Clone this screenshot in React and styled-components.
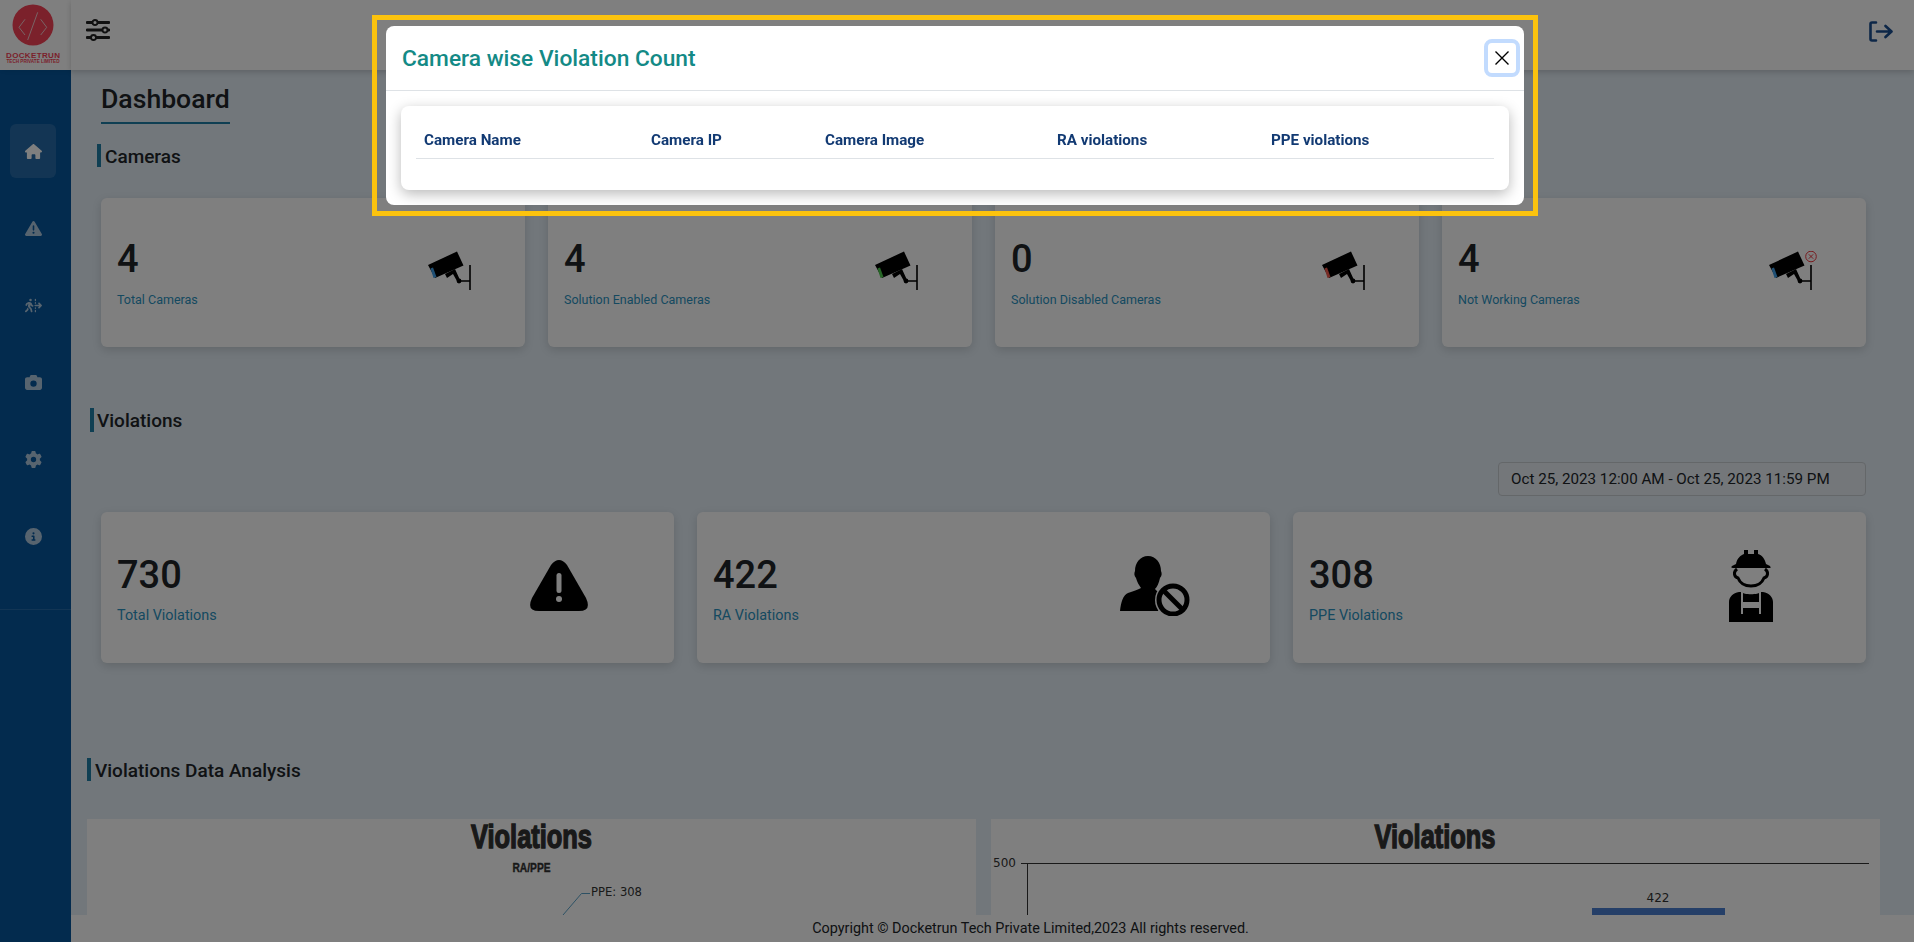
import styled, { createGlobalStyle } from 'styled-components';
import {
  FaHouse,
  FaTriangleExclamation,
  FaPersonWalkingDashedLineArrowRight,
  FaCamera,
  FaGear,
  FaCircleInfo,
} from 'react-icons/fa6';

const GlobalStyle = createGlobalStyle`
  html, body { margin: 0; padding: 0; height: 100%; overflow: hidden; }
  body { font-family: Roboto, "Liberation Sans", sans-serif; color: #212529; }
  * { box-sizing: border-box; }
`;

const Page = styled.div`
  display: flex;
  width: 100vw;
  height: 100vh;
  background: #e4eef6;
`;

const Sidebar = styled.aside`
  flex: 0 0 71px;
  display: flex;
  flex-direction: column;
  background: #06569c;
`;

const LogoBox = styled.div`
  height: 70px;
  padding-right: 5px;
  background: #fff;
  display: flex;
  justify-content: center;
  box-shadow: 2px 0 5px rgba(0, 0, 0, 0.1);
`;

const NavList = styled.nav`
  display: flex;
  flex-direction: column;
  gap: 23px;
  padding: 54px 10px 46px;
  border-bottom: 1px solid rgba(255, 255, 255, 0.12);
  height: 540px;
`;

const NavItem = styled.a`
  height: 54px;
  width: 46px;
  border-radius: 6px;
  display: flex;
  align-items: center;
  justify-content: center;
  font-size: 17px;
  color: ${props => (props.$active ? '#fff' : 'rgba(255,255,255,0.68)')};
  background: ${props => (props.$active ? 'rgba(255,255,255,0.13)' : 'transparent')};
`;

const Main = styled.div`
  flex: 1;
  min-width: 0;
  display: flex;
  flex-direction: column;
`;

const Topbar = styled.header`
  flex: 0 0 70px;
  display: flex;
  align-items: center;
  justify-content: space-between;
  padding: 0 21px 8px 15px;
  background: #fff;
  box-shadow: 0 2px 6px rgba(0, 0, 0, 0.18);
  position: relative;
`;

const Content = styled.main`
  flex: 1;
  min-height: 0;
  overflow: hidden;
  padding-top: 12px;
`;

const PageTitle = styled.h1`
  display: inline-block;
  margin: 0 0 0 30px;
  padding-bottom: 6px;
  font-size: 26.6px;
  line-height: 34px;
  font-weight: 500;
  color: #212529;
  border-bottom: 2px solid #1f7ea6;
`;

const SectionHead = styled.h2`
  margin: ${props => props.$top}px 0 0 ${props => props.$left}px;
  padding-left: ${props => props.$gap || 4}px;
  height: ${props => props.$height || 23}px;
  border-left: 4px solid #1f7ea6;
  font-size: 19px;
  font-weight: 500;
  line-height: ${props => (props.$height || 23) + 2}px;
  color: #212529;
`;

const CardGrid = styled.div`
  display: grid;
  grid-template-columns: repeat(${props => props.$cols}, 1fr);
  gap: 23px;
  margin: ${props => props.$top}px 48px 0 30px;
`;

const Card = styled.div`
  height: ${props => props.$height}px;
  padding-left: 16px;
  display: flex;
  justify-content: space-between;
  align-items: flex-start;
  background: #fff;
  border-radius: 6px;
  box-shadow: 0 3px 10px rgba(0, 0, 0, 0.14);
`;

const CardText = styled.div`
  padding-top: ${props => props.$pad}px;
`;

const Count = styled.div`
  font-size: 38px;
  line-height: 44px;
  font-weight: 500;
  color: #212529;
`;

const Label = styled.div`
  margin-top: 10px;
  font-size: ${props => props.$size}px;
  line-height: 18px;
  color: #2b93c1;
`;

const IconSlot = styled.div`
  display: flex;
  margin: ${props => props.$top}px ${props => props.$right}px 0 0;
`;

const DateRow = styled.div`
  display: flex;
  justify-content: flex-end;
  margin: 30px 48px 0 0;
`;

const DateBox = styled.div`
  width: 368px;
  height: 34px;
  padding-left: 12px;
  border: 1px solid #c9ced3;
  border-radius: 4px;
  font-size: 15.2px;
  line-height: 32px;
  color: #212529;
  background: #e9eff4;
`;

const ChartRow = styled.div`
  display: grid;
  grid-template-columns: 889px 889px;
  gap: 15px;
  margin: 38px 0 0 16px;
`;

const ChartPanel = styled.div`
  height: 240px;
  background: #fff;
`;

const ChartTitle = styled.text`
  font-family: "Liberation Sans", sans-serif;
  font-size: 33px;
  font-weight: 700;
  fill: #333;
  stroke: #333;
  stroke-width: 1.4px;
  text-anchor: middle;
`;

const ChartSubtitle = styled.text`
  font-family: "Liberation Sans", sans-serif;
  font-size: 13px;
  font-weight: 700;
  fill: #333;
  stroke: #333;
  stroke-width: 0.4px;
  text-anchor: middle;
`;

const ChartLabel = styled.text`
  font-family: "DejaVu Sans", sans-serif;
  font-size: 12px;
  fill: #333;
  text-anchor: ${props => props.$anchor || 'start'};
`;

const Footer = styled.footer`
  flex: 0 0 27px;
  background: #fff;
  font-size: 14.4px;
  line-height: 27px;
  text-align: center;
  padding-left: 76px;
  color: #212529;
  position: relative;
`;

const Backdrop = styled.div`
  position: fixed;
  inset: 0;
  padding: 15px 0 0 372px;
  background: rgba(0, 0, 0, 0.5);
`;

const ModalFrame = styled.div`
  width: 1166px;
  height: 201px;
  padding: 6px 9px;
  border: 5px solid #fcc30e;
`;

const Modal = styled.div`
  height: 100%;
  background: #fff;
  border-radius: 8px;
  display: flex;
  flex-direction: column;
`;

const ModalHeader = styled.div`
  flex: 0 0 65px;
  display: flex;
  align-items: center;
  justify-content: space-between;
  padding: 0 4px 0 16px;
  border-bottom: 1px solid #dee2e6;
`;

const ModalTitle = styled.h5`
  margin: 0;
  font-size: 22.75px;
  font-weight: 500;
  color: #148a86;
`;

const CloseButton = styled.button`
  width: 36px;
  height: 38px;
  padding: 0;
  display: flex;
  align-items: center;
  justify-content: center;
  background: #fff;
  border: 4px solid #c2dbfe;
  border-radius: 8px;
`;

const ModalBody = styled.div`
  flex: 1;
  padding: 15px;
`;

const TableCard = styled.div`
  height: 84px;
  padding: 15px 15px 0;
  background: #fff;
  border-radius: 8px;
  box-shadow: 0 4px 14px rgba(0, 0, 0, 0.28);
`;

const HeadRow = styled.div`
  display: grid;
  grid-template-columns: 227px 174px 232px 214px 1fr;
  height: 38px;
  padding-left: 8px;
  border-bottom: 1px solid #dee2e6;
  font-size: 15.2px;
  font-weight: 700;
  line-height: 38px;
  color: #123a73;
`;

const Logo = () => (
  <svg width="66" height="70" viewBox="0 0 66 70">
    <circle cx="33" cy="25" r="20.5" fill="#f64256" />
    <path
      d="M25 19.3L19 27.3L25 35M40.7 19.3L46.7 27.3L40.7 35M27.7 40L37.7 12.3"
      fill="none"
      stroke="#f2c9cc"
      strokeWidth="1"
    />
    <text x="33" y="57.5" textAnchor="middle" fontFamily="Liberation Sans" fontSize="8" fontWeight="700" textLength="54" lengthAdjust="spacing" fill="#f64256">DOCKETRUN</text>
    <text x="33" y="63" textAnchor="middle" fontFamily="Liberation Sans" fontSize="4.6" fontWeight="700" textLength="53" lengthAdjust="spacingAndGlyphs" fill="#f64256">TECH PRIVATE LIMITED</text>
  </svg>
);

const SlidersIcon = () => (
  <svg width="24" height="24" viewBox="0 0 24 24" fill="#fff" stroke="#222" strokeWidth="1.9">
    <path d="M1 3.5H23M1 11H23M1 18.5H23" strokeWidth="2.8" strokeLinecap="round" />
    <circle cx="9" cy="3.5" r="2.5" />
    <circle cx="19" cy="11" r="2.5" />
    <circle cx="7.5" cy="18.5" r="2.5" />
  </svg>
);

const LogoutIcon = () => (
  <svg width="24" height="21" viewBox="0 0 24 21" fill="none" stroke="#1a4e90" strokeWidth="2.6" strokeLinecap="round" strokeLinejoin="round">
    <path d="M7 1.5H3Q1.5 1.5 1.5 3V18Q1.5 19.5 3 19.5H7" />
    <path d="M8 10.5H22M16.5 5L22.5 10.5L16.5 16" />
  </svg>
);

const CameraIcon = ({ lens, fault }) => (
  <svg width="52" height="39" viewBox="0 0 52 39">
    <path d="M0 14L29 0.5L35.5 14.5L7 27Z" fill="#000" />
    <path d="M2.5 17.5L5 16.5L8.5 26L5.5 27Z" fill={lens} />
    <path d="M17 23L27 18L32 29L29.5 31L25 23L19 27Z" fill="#000" />
    <circle cx="31" cy="30" r="2.4" fill="#000" />
    <path d="M31 30H42M42 14V39" stroke="#000" strokeWidth="1.6" />
    {fault && (
      <g fill="none" stroke="#f0343c" strokeWidth="1">
        <circle cx="42" cy="5.5" r="5.3" />
        <path d="M39.8 3.3L44.2 7.7M44.2 3.3L39.8 7.7" />
      </g>
    )}
  </svg>
);

const WarningIcon = () => (
  <svg width="58" height="52" viewBox="0 0 58 52">
    <path d="M21 6Q29 -4 37 6L56 39Q62 52 49 52H9Q-4 52 2 39Z" fill="#000" />
    <rect x="26.5" y="14" width="5" height="20" rx="2.5" fill="#fff" />
    <circle cx="29" cy="40" r="3" fill="#fff" />
  </svg>
);

const UserBlockIcon = () => (
  <svg width="71" height="60" viewBox="0 0 71 60">
    <path d="M28 0C36 0 41 7 41 15C42 17 42 20 40 22C39 27 37 31 35 33C37 36 42 37 46 38L38 55H0C1 46 3 39 8 37C13 35 18 34 21 32C19 29 17 26 16 22C14 20 14 17 15 15C15 7 20 0 28 0Z" fill="#000" />
    <circle cx="53" cy="44" r="18" fill="#fff" />
    <circle cx="53" cy="44" r="14" fill="none" stroke="#000" strokeWidth="5" />
    <path d="M43 34L63 54" stroke="#000" strokeWidth="5" />
  </svg>
);

const WorkerIcon = () => (
  <svg width="44" height="72" viewBox="0 0 44 72">
    <path d="M7 14C8 8 12 5 15 4V0H19V4H25V0H29V4C33 5 36 9 37 14L41 16C42 18 42 18 40 18H4C2 18 2 17 3 16Z" fill="#000" />
    <path d="M8 19C4 22 5 27 9 28C11 33 16 36 22 36C28 36 33 33 35 28C39 27 40 22 36 19" fill="none" stroke="#000" strokeWidth="3" />
    <path d="M10 42H12V58H32V42H34C40 43 44 47 44 52V72H0V52C0 47 4 43 10 42Z" fill="#000" />
    <path d="M12 42C15 45 29 45 32 42V53H12Z" fill="#000" />
    <path d="M12 42H14V64H12ZM30 42H32V64H30ZM14 52H30V56H14Z" fill="#fff" />
  </svg>
);

const CloseIcon = () => (
  <svg width="14" height="14" viewBox="0 0 14 14" stroke="#000" strokeWidth="1.4">
    <path d="M0.5 0.5L13.5 13.5M13.5 0.5L0.5 13.5" />
  </svg>
);

const navItems = [FaHouse, FaTriangleExclamation, FaPersonWalkingDashedLineArrowRight, FaCamera, FaGear, FaCircleInfo];

const cameraCards = [
  { count: 4, label: 'Total Cameras', lens: '#3f9fe8' },
  { count: 4, label: 'Solution Enabled Cameras', lens: '#4ccc4c' },
  { count: 0, label: 'Solution Disabled Cameras', lens: '#f0584c' },
  { count: 4, label: 'Not Working Cameras', lens: '#3f9fe8', fault: true },
];

const violationCards = [
  { count: 730, label: 'Total Violations', icon: <WarningIcon />, top: 47, right: 86 },
  { count: 422, label: 'RA Violations', icon: <UserBlockIcon />, top: 44, right: 79 },
  { count: 308, label: 'PPE Violations', icon: <WorkerIcon />, top: 38, right: 93 },
];

const columns = ['Camera Name', 'Camera IP', 'Camera Image', 'RA violations', 'PPE violations'];

export default function App() {
  return (
    <>
      <GlobalStyle />
      <Page>
        <Sidebar>
          <LogoBox>
            <Logo />
          </LogoBox>
          <NavList>
            {navItems.map((Icon, i) => (
              <NavItem key={i} $active={i === 0}>
                <Icon />
              </NavItem>
            ))}
          </NavList>
        </Sidebar>
        <Main>
          <Topbar>
            <SlidersIcon />
            <LogoutIcon />
          </Topbar>
          <Content>
            <PageTitle>Dashboard</PageTitle>
            <SectionHead $top={20} $left={26}>Cameras</SectionHead>
            <CardGrid $cols={4} $top={31}>
              {cameraCards.map(card => (
                <Card key={card.label} $height={149}>
                  <CardText $pad={39}>
                    <Count>{card.count}</Count>
                    <Label $size={12.5}>{card.label}</Label>
                  </CardText>
                  <IconSlot $top={53} $right={45}>
                    <CameraIcon lens={card.lens} fault={card.fault} />
                  </IconSlot>
                </Card>
              ))}
            </CardGrid>
            <SectionHead $top={61} $left={19} $height={24} $gap={3}>Violations</SectionHead>
            <DateRow>
              <DateBox>Oct 25, 2023 12:00 AM - Oct 25, 2023 11:59 PM</DateBox>
            </DateRow>
            <CardGrid $cols={3} $top={16}>
              {violationCards.map(card => (
                <Card key={card.label} $height={151}>
                  <CardText $pad={41}>
                    <Count>{card.count}</Count>
                    <Label $size={14.4}>{card.label}</Label>
                  </CardText>
                  <IconSlot $top={card.top} $right={card.right}>
                    {card.icon}
                  </IconSlot>
                </Card>
              ))}
            </CardGrid>
            <SectionHead $top={95} $left={16}>Violations Data Analysis</SectionHead>
            <ChartRow>
              <ChartPanel>
                <svg width="889" height="96" viewBox="0 0 889 96">
                  <ChartTitle x="444.5" y="29" textLength="121" lengthAdjust="spacingAndGlyphs">Violations</ChartTitle>
                  <ChartSubtitle x="444.5" y="53" textLength="38" lengthAdjust="spacingAndGlyphs">RA/PPE</ChartSubtitle>
                  <path d="M476 96L494.5 74.5H503" fill="none" stroke="#5ba3c9" />
                  <ChartLabel x="504" y="77" textLength="51" lengthAdjust="spacingAndGlyphs">PPE: 308</ChartLabel>
                </svg>
              </ChartPanel>
              <ChartPanel>
                <svg width="889" height="96" viewBox="0 0 889 96">
                  <ChartTitle x="444" y="29" textLength="121" lengthAdjust="spacingAndGlyphs">Violations</ChartTitle>
                  <ChartLabel x="25" y="48" $anchor="end">500</ChartLabel>
                  <path d="M30 44.5H878M36.5 44V96" fill="none" stroke="#333" />
                  <ChartLabel x="667" y="83" $anchor="middle">422</ChartLabel>
                  <rect x="601" y="89" width="133" height="10" fill="#4a7fd1" />
                </svg>
              </ChartPanel>
            </ChartRow>
          </Content>
          <Footer>Copyright © Docketrun Tech Private Limited,2023 All rights reserved.</Footer>
        </Main>
      </Page>
      <Backdrop>
        <ModalFrame>
          <Modal>
            <ModalHeader>
              <ModalTitle>Camera wise Violation Count</ModalTitle>
              <CloseButton aria-label="Close">
                <CloseIcon />
              </CloseButton>
            </ModalHeader>
            <ModalBody>
              <TableCard>
                <HeadRow>
                  {columns.map(col => (
                    <span key={col}>{col}</span>
                  ))}
                </HeadRow>
              </TableCard>
            </ModalBody>
          </Modal>
        </ModalFrame>
      </Backdrop>
    </>
  );
}
